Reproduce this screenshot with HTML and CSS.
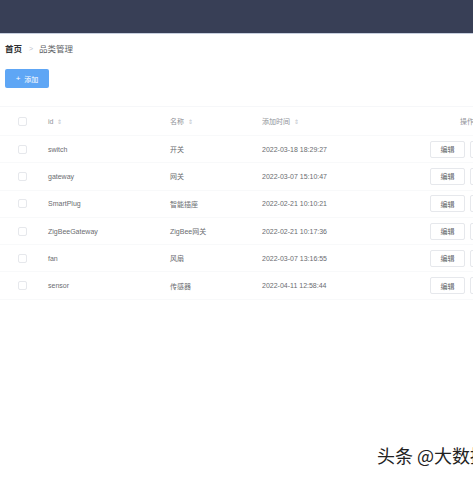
FILE: index.html
```html
<!DOCTYPE html>
<html>
<head>
<meta charset="utf-8">
<link rel="stylesheet" href="styles.css">
</head>
<body>
<div class="topbar"></div>
<div class="main">
  <div class="crumbs"><span class="home">首页</span><span class="sep">&gt;</span><span class="cur">品类管理</span></div>
  <button class="add"><span class="plus">+</span>添加</button>
  <div class="table">
    <div class="row head">
      <div class="c cb"><span class="box"></span></div>
      <div class="c">id <span class="sort">⇕</span></div>
      <div class="c">名称 <span class="sort">⇕</span></div>
      <div class="c">添加时间 <span class="sort">⇕</span></div>
      <div class="c op">操作</div>
    </div>
    <div class="row">
      <div class="c cb"><span class="box"></span></div>
      <div class="c">switch</div><div class="c">开关</div><div class="c">2022-03-18 18:29:27</div>
      <div class="c ops"><span class="btn">编辑</span><span class="btn">删除</span></div>
    </div>
    <div class="row">
      <div class="c cb"><span class="box"></span></div>
      <div class="c">gateway</div><div class="c">网关</div><div class="c">2022-03-07 15:10:47</div>
      <div class="c ops"><span class="btn">编辑</span><span class="btn">删除</span></div>
    </div>
    <div class="row">
      <div class="c cb"><span class="box"></span></div>
      <div class="c">SmartPlug</div><div class="c">智能插座</div><div class="c">2022-02-21 10:10:21</div>
      <div class="c ops"><span class="btn">编辑</span><span class="btn">删除</span></div>
    </div>
    <div class="row">
      <div class="c cb"><span class="box"></span></div>
      <div class="c">ZigBeeGateway</div><div class="c">ZigBee网关</div><div class="c">2022-02-21 10:17:36</div>
      <div class="c ops"><span class="btn">编辑</span><span class="btn">删除</span></div>
    </div>
    <div class="row">
      <div class="c cb"><span class="box"></span></div>
      <div class="c">fan</div><div class="c">风扇</div><div class="c">2022-03-07 13:16:55</div>
      <div class="c ops"><span class="btn">编辑</span><span class="btn">删除</span></div>
    </div>
    <div class="row">
      <div class="c cb"><span class="box"></span></div>
      <div class="c">sensor</div><div class="c">传感器</div><div class="c">2022-04-11 12:58:44</div>
      <div class="c ops"><span class="btn">编辑</span><span class="btn">删除</span></div>
    </div>
  </div>
</div>
<div class="mark">头条 @大数据</div>
</body>
</html>
```
FILE: styles.css
```css
html, body {
  margin: 0;
  padding: 0;
  width: 473px;
  height: 477px;
  overflow: hidden;
  background: #fff;
  font-family: "Liberation Sans", "Noto Sans CJK SC", sans-serif;
  position: relative;
}
.topbar {
  height: 33px;
  background: #383f56;
  border-bottom: 1px solid #c6cede;
}
.main {
  padding: 0 0 0 5px;
  width: 560px;
}
.crumbs {
  margin-top: 9px;
  height: 12px;
  line-height: 12px;
  font-size: 8.5px;
  color: #606266;
  display: flex;
  align-items: center;
}
.home { font-weight: bold; color: #303133; }
.sep { color: #c0c4cc; margin: 0 6px 0 7px; font-size: 7px; }
.add {
  margin-top: 14px;
  width: 44px;
  height: 19px;
  border: none;
  border-radius: 2px;
  background: #5ea6f5;
  color: #fff;
  font-family: inherit;
  font-size: 7px;
  padding: 0;
  display: flex;
  align-items: center;
  justify-content: center;
}
.plus { margin-right: 4px; font-size: 8px; }
.table {
  margin-top: 18px;
  margin-left: -5px;
  border-top: 1px solid #f6f7f9;
}
.row {
  display: grid;
  grid-template-columns: 42px 122px 92px 168px 1fr;
  height: 27.3px;
  align-items: center;
  border-bottom: 1px solid #f8f9fa;
  font-size: 7px;
  color: #6a6c70;
  box-sizing: border-box;
}
.row.head {
  height: 29px;
  color: #909399;
}
.c { padding-left: 6px; white-space: nowrap; }
.cb { padding-left: 18px; display: flex; align-items: center; }
.box {
  width: 9px;
  height: 9px;
  border: 1px solid #e6e8ec;
  border-radius: 2px;
  box-sizing: border-box;
  display: block;
}
.sort { color: #c0c4cc; font-size: 6px; margin-left: 2px; }
.op { padding-left: 36px; }
.ops { padding-left: 6px; display: flex; gap: 5px; }
.btn {
  width: 35px;
  height: 17px;
  box-sizing: border-box;
  border: 1px solid #e6e8ec;
  border-radius: 2px;
  display: flex;
  align-items: center;
  justify-content: center;
  color: #606266;
  font-size: 7px;
}
.mark {
  position: absolute;
  left: 377px;
  top: 442px;
  font-size: 18px;
  color: #222;
  white-space: nowrap;
  text-shadow: 0 0 2px #fff, 0 0 1px #fff;
  font-family: "Noto Sans CJK SC", sans-serif;
}
```
